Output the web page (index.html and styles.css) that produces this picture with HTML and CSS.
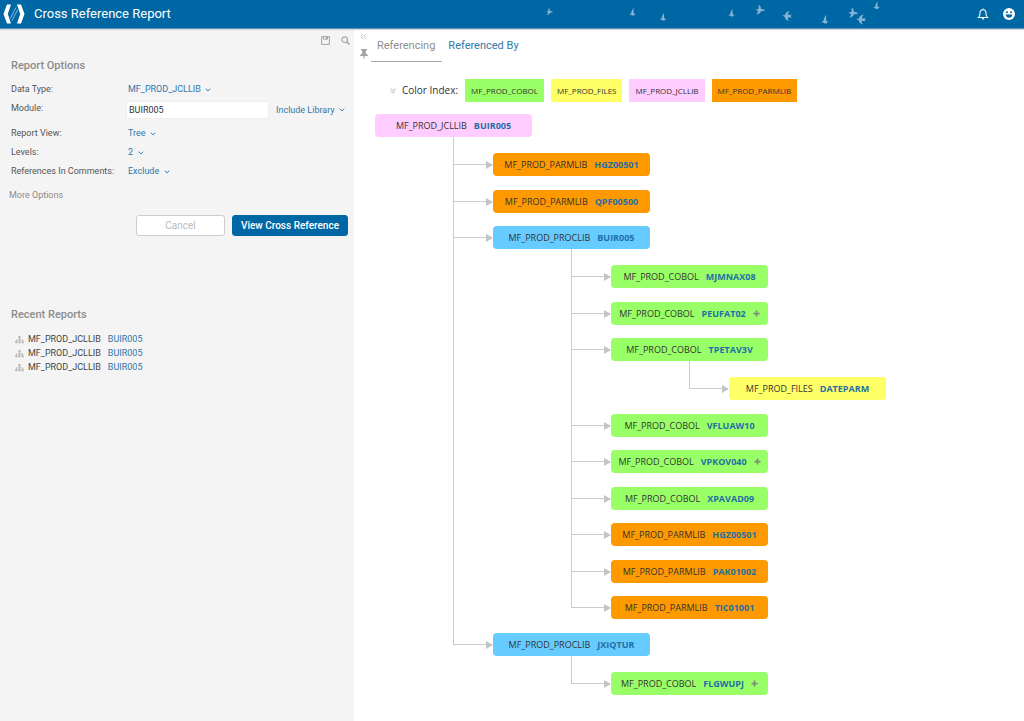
FILE: index.html
```html
<!DOCTYPE html>
<html lang="en">
<head>
<meta charset="utf-8">
<meta name="viewport" content="width=device-width, initial-scale=1">
<title>Cross Reference Report</title>
<link rel="stylesheet" href="styles.css">
</head>
<body>
<svg class="symbols" aria-hidden="true">
  <symbol id="chevron" viewBox="0 0 6 4"><path d="M.8 .7 3 2.9 5.200 .7" fill="none" stroke="currentColor" stroke-width="1"/></symbol>
  <symbol id="tree" viewBox="0 0 10 10"><path d="M5 3v3M1.500 8V5.500h7V8M5 5v3" fill="none" stroke="currentColor"/><path d="M3.800 1h2.400v2.500H3.800zM.3 7h2.400v2.300H.3zM3.800 7h2.400v2.300H3.800zM7.300 7h2.400v2.300H7.300z" fill="currentColor"/></symbol>
  <symbol id="gull" viewBox="0 0 8 9"><path d="M5.600 0C3.800 1.300 2.700 3.300 2.600 5.800L.2 7.200l2.300.3 1 1h2.200l.3-1L8 6.700 5.600 6.200C4.900 4.200 4.900 2 5.600 0z" fill="currentColor"/></symbol>
  <symbol id="swift" viewBox="0 0 10 10"><path d="M3.500 0c1.600.8 2.500 2.300 2.400 4.200L9.800 5.200v1L6 6.700C5.300 8.300 3.600 9.700 1.300 10c1.300-1.300 1.600-2.300 1.700-3.500L.2 5.200l3.100-.8C3.800 3 3.800 1.500 3.500 0z" fill="currentColor"/></symbol>
  <symbol id="martin" viewBox="0 0 10 10"><path d="M7.800 0C5 .4 3.300 2 3 4L.2 4.600l2.600 1.400C3 7.700 4.400 9.400 7 10 6 8.600 5.700 7.600 5.900 6.500L9.800 6.500 8.500 5l1.300-1.500-3.800.4C6 2.700 6.500 1.300 7.800 0z" fill="currentColor"/></symbol>
  <symbol id="plus" viewBox="0 0 8 8"><path d="M4 .5v7M.5 4h7" stroke="currentColor" stroke-width="2"/></symbol>
</svg>

<header class="topbar">
  <svg class="logo" viewBox="0 0 22 20" aria-hidden="true">
    <path d="M4 .5h4L4.800 10 8 19.500H4L.5 10zM18 .5h-4l3.200 9.500-3.200 9.500h4l3.500-9.500z" fill="#fff"/>
    <path d="M13 3.500 7.200 14.500M14.800 5.500 9 16.500" stroke="#a9cde3" stroke-width=".8"/>
  </svg>
  <h1 class="title">Cross Reference Report</h1>
  <svg class="birds" viewBox="0 0 340 28" aria-hidden="true">
    <use href="#swift" x="6" y="8" width="7" height="7"/>
    <use href="#gull" x="89" y="8" width="7" height="8"/>
    <use href="#gull" x="119" y="13" width="8" height="8"/>
    <use href="#gull" x="188" y="9" width="7" height="8"/>
    <use href="#swift" x="215" y="4" width="10" height="11"/>
    <use href="#martin" x="242" y="11" width="10" height="10"/>
    <use href="#gull" x="281" y="15" width="8" height="9"/>
    <use href="#swift" x="308" y="7" width="10" height="11"/>
    <use href="#martin" x="316" y="14" width="10" height="11"/>
    <use href="#gull" x="333" y="1" width="7" height="9"/>
  </svg>
  <button class="icon-button top-icon" aria-label="Notifications">
    <svg width="12" height="12" viewBox="0 0 12 12"><path d="M1.500 9.500C3 8.300 3 6.800 3 5.200 3 3.200 4.200 1.800 6 1.800s3 1.400 3 3.400c0 1.600 0 3.100 1.500 4.300zM6 .5v1.300" fill="none" stroke="#fff" stroke-width="1.100"/><path d="M4.700 10.300h2.600c0 .8-.5 1.300-1.300 1.300s-1.300-.5-1.300-1.300z" fill="#fff"/></svg>
  </button>
  <button class="icon-button top-icon" aria-label="Account">
    <svg width="12" height="12" viewBox="0 0 12 12"><circle cx="6" cy="6" r="6" fill="#fff"/><circle cx="4" cy="4.300" r="1" fill="#0067a5"/><circle cx="8" cy="4.300" r="1" fill="#0067a5"/><path d="M2.600 6.500h6.800C9 8.700 7.800 9.700 6 9.700S3 8.700 2.600 6.500z" fill="#0067a5"/></svg>
  </button>
</header>

<div class="layout">
  <aside class="sidebar">
    <div class="tools">
      <button class="icon-button" aria-label="Save"><svg width="9" height="9" viewBox="0 0 9 9"><path d="M.6.600h7.800v7.800H.6zM2.500.6v2.600h4V.6" fill="none" stroke="currentColor"/><path d="M5 1h1.500v2H5z" fill="currentColor"/></svg></button>
      <button class="icon-button" aria-label="Search"><svg width="9" height="9" viewBox="0 0 9 9"><circle cx="3.700" cy="3.700" r="2.800" fill="none" stroke="currentColor" stroke-width="1.200"/><path d="M5.700 5.700 8.400 8.400" stroke="currentColor" stroke-width="1.500"/></svg></button>
    </div>

    <h2 class="heading">Report Options</h2>
    <form class="options">
      <label for="type">Data Type:</label>
      <div class="field"><select id="type" class="picker"><option>MF_PROD_JCLLIB</option></select><svg class="chevron"><use href="#chevron"/></svg></div>

      <label for="module">Module:</label>
      <div class="field module-field">
        <input id="module" class="textbox" type="text" value="BUIR005">
        <select class="picker" aria-label="Library"><option>Include Library</option></select><svg class="chevron"><use href="#chevron"/></svg>
      </div>

      <label for="view">Report View:</label>
      <div class="field"><select id="view" class="picker"><option>Tree</option></select><svg class="chevron"><use href="#chevron"/></svg></div>

      <label for="levels">Levels:</label>
      <div class="field"><select id="levels" class="picker"><option>2</option></select><svg class="chevron"><use href="#chevron"/></svg></div>

      <label for="comments">References In Comments:</label>
      <div class="field"><select id="comments" class="picker"><option>Exclude</option></select><svg class="chevron"><use href="#chevron"/></svg></div>
    </form>
    <button class="more">More Options</button>
    <div class="actions">
      <button class="button cancel">Cancel</button>
      <button class="button primary">View Cross Reference</button>
    </div>

    <h2 class="heading">Recent Reports</h2>
    <ul class="recent">
      <li><svg class="tree-icon"><use href="#tree"/></svg><span>MF_PROD_JCLLIB</span><a href="#">BUIR005</a></li>
      <li><svg class="tree-icon"><use href="#tree"/></svg><span>MF_PROD_JCLLIB</span><a href="#">BUIR005</a></li>
      <li><svg class="tree-icon"><use href="#tree"/></svg><span>MF_PROD_JCLLIB</span><a href="#">BUIR005</a></li>
    </ul>
  </aside>

  <main class="report">
    <div class="report-head">
      <div class="panel-tools">
        <button class="icon-button" aria-label="Collapse panel"><svg width="7" height="7" viewBox="0 0 7 7"><path d="M3.200.7.8 3.500l2.400 2.800M6.200.7 3.800 3.500l2.400 2.800" fill="none" stroke="#c4c4c4" stroke-width=".9"/></svg></button>
        <button class="icon-button" aria-label="Pin panel"><svg width="8" height="11" viewBox="0 0 8 11"><path d="M1 0h6v1.500H5.800v3L7.800 6v1H4.700L4 11l-.7-4H.2V6l2-1.500v-3H1z" fill="#a3a3a3"/></svg></button>
      </div>
      <nav class="tabs">
        <a class="tab active" href="#">Referencing</a>
        <a class="tab" href="#">Referenced By</a>
      </nav>
    </div>

    <div class="legend">
      <button class="icon-button" aria-label="Collapse color index"><svg width="6" height="6" viewBox="0 0 6 6"><path d="M.6.600 3 2.700 5.400.6M.6 3 3 5.100 5.400 3" fill="none" stroke="#a9b5b2" stroke-width=".9"/></svg></button>
      <span class="legend-title">Color Index:</span>
      <ul class="swatches">
        <li class="swatch cobol">MF_PROD_COBOL</li>
        <li class="swatch files">MF_PROD_FILES</li>
        <li class="swatch jcllib">MF_PROD_JCLLIB</li>
        <li class="swatch parmlib">MF_PROD_PARMLIB</li>
      </ul>
    </div>

    <ul class="tree">
      <li>
        <div class="node jcllib">MF_PROD_JCLLIB <a href="#">BUIR005</a></div>
        <ul>
          <li><div class="node parmlib">MF_PROD_PARMLIB <a href="#">HGZ00501</a></div></li>
          <li><div class="node parmlib">MF_PROD_PARMLIB <a href="#">QPF00500</a></div></li>
          <li>
            <div class="node proclib">MF_PROD_PROCLIB <a href="#">BUIR005</a></div>
            <ul>
              <li><div class="node cobol">MF_PROD_COBOL <a href="#">MJMNAX08</a></div></li>
              <li><div class="node cobol">MF_PROD_COBOL <a href="#">PEUFAT02</a><button class="icon-button expand" aria-label="Expand PEUFAT02"><svg width="7" height="7"><use href="#plus"/></svg></button></div></li>
              <li>
                <div class="node cobol">MF_PROD_COBOL <a href="#">TPETAV3V</a></div>
                <ul>
                  <li><div class="node files">MF_PROD_FILES <a href="#">DATEPARM</a></div></li>
                </ul>
              </li>
              <li><div class="node cobol">MF_PROD_COBOL <a href="#">VFLUAW10</a></div></li>
              <li><div class="node cobol">MF_PROD_COBOL <a href="#">VPKOV040</a><button class="icon-button expand" aria-label="Expand VPKOV040"><svg width="7" height="7"><use href="#plus"/></svg></button></div></li>
              <li><div class="node cobol">MF_PROD_COBOL <a href="#">XPAVAD09</a></div></li>
              <li><div class="node parmlib">MF_PROD_PARMLIB <a href="#">HGZ00501</a></div></li>
              <li><div class="node parmlib">MF_PROD_PARMLIB <a href="#">PAK01002</a></div></li>
              <li><div class="node parmlib">MF_PROD_PARMLIB <a href="#">TIC01001</a></div></li>
            </ul>
          </li>
          <li>
            <div class="node proclib">MF_PROD_PROCLIB <a href="#">JXIQTUR</a></div>
            <ul>
              <li><div class="node cobol">MF_PROD_COBOL <a href="#">FLGWUPJ</a><button class="icon-button expand" aria-label="Expand FLGWUPJ"><svg width="7" height="7"><use href="#plus"/></svg></button></div></li>
            </ul>
          </li>
        </ul>
      </li>
    </ul>
  </main>
</div>
</body>
</html>
```

FILE: styles.css
```css
* { box-sizing: border-box; }

body {
  margin: 0;
  min-height: 100vh;
  display: flex;
  flex-direction: column;
  font: 9px/15px Roboto, sans-serif;
  color: #555;
  background: #fff;
}

ul { list-style: none; margin: 0; padding: 0; }
a { color: #2f77ab; text-decoration: none; }
button, input, select { font: inherit; }
.symbols { position: absolute; width: 0; height: 0; }

.icon-button {
  display: inline-flex;
  padding: 0;
  border: 0;
  background: none;
  color: #a3a3a3;
}

/* Top bar */
.topbar {
  position: relative;
  display: flex;
  align-items: center;
  height: 29px;
  padding: 0 9px 0 3px;
  background: #0067a5;
  border-bottom: 1px solid #5b96c0;
  box-shadow: 0 1px 1px #d5d5da;
}
.logo { width: 22px; height: 20px; margin-right: 9px; }
.title { flex: 1; margin: 0; font-size: 13px; line-height: 20px; font-weight: 400; color: #fff; }
.birds { position: absolute; right: 144px; top: 0; width: 340px; height: 28px; color: #86b3d3; }
.top-icon { margin-left: 14px; }

.layout { flex: 1; display: flex; }

/* Sidebar */
.sidebar { flex: 0 0 354px; padding: 7px 4px 0 11px; background: #f4f4f4; }
.tools { display: flex; justify-content: flex-end; gap: 11px; height: 20px; }
.tools .icon-button { height: 9px; }
.heading { margin: 0; font-size: 11px; line-height: 20px; font-weight: 500; color: #8c8c8c; }

.options {
  display: grid;
  grid-template-columns: 117px 1fr;
  row-gap: 4px;
  margin-top: 6px;
}
.field { display: flex; align-items: center; }
.picker {
  appearance: none;
  padding: 0;
  border: 0;
  background: none;
  color: #2f77ab;
}
.chevron { width: 6px; height: 4px; margin-left: 4px; color: #2f77ab; }
.module-field { margin-bottom: 3px; }
.textbox {
  width: 143px;
  height: 18px;
  margin: 0 7px 0 -2px;
  padding: 0 2px;
  border: 1px solid #eee;
  border-radius: 2px;
  background: #fff;
  color: #333;
}
.more { display: block; margin: 9px 0 0 -2px; padding: 0; border: 0; background: none; color: #8c8c8c; }
.actions { display: flex; justify-content: flex-end; gap: 7px; margin: 12px 2px 69px 0; }
.button { height: 21px; padding: 0 8px; border: 1px solid #0067a5; border-radius: 3px; font-size: 10px; }
.cancel { width: 89px; background: #fff; border-color: #ccc; color: #bbb; }
.primary { background: #0067a5; color: #fff; font-weight: 500; }

.recent { margin-top: 7px; }
.recent li { display: flex; align-items: center; height: 14px; color: #444; }
.recent a { margin-left: 7px; }
.tree-icon { width: 9px; height: 9px; margin: 0 4px 0 4px; color: #b5b5b5; }

/* Report */
.report { flex: 1; padding: 4px 8px 16px 6px; }
.report-head { display: flex; gap: 3px; }
.panel-tools { display: flex; flex-direction: column; gap: 9px; width: 8px; }
.tabs { display: flex; }
.tab { padding: 1px 7px 3px 6px; font-size: 11px; line-height: 24px; border-bottom: 1px solid transparent; }
.tab.active { color: #8f8f8f; border-color: #aaa; }

.legend {
  display: flex;
  align-items: center;
  margin: 17px 0 12px 30px;
  font-family: "Open Sans", sans-serif;
  color: #333;
}
.legend-title { margin: 0 7px 0 6px; font-size: 10px; }
.swatches { display: flex; flex-wrap: wrap; gap: 7px; }
.swatch { padding: 0 6px; font-size: 8px; line-height: 23px; }

.cobol { background: #99ff66; }
.files { background: #ffff66; }
.jcllib { background: #ffccff; }
.parmlib { background: #ff9900; }
.proclib { background: #66ccff; }

/* Reference tree: each child list is indented and joined to its parent node */
.tree { margin-left: 15px; font-family: "Open Sans", sans-serif; color: #333; }
.tree ul { padding: 16px 0 0 118px; }
.tree ul li { position: relative; }
.tree ul > li + li { margin-top: 13px; }
.tree ul > li:nth-child(even) { margin-top: 14px; }
.tree ul > li::before {
  content: "";
  position: absolute;
  left: -40px;
  top: -16px;
  bottom: 0;
  border-left: 1px solid #ccc;
}
.tree ul > li:last-child::before { bottom: auto; height: 28px; }
.node {
  position: relative;
  display: flex;
  align-items: center;
  justify-content: center;
  gap: 7px;
  width: 157px;
  height: 23px;
  border-radius: 4px;
  white-space: nowrap;
}
.node a { font-weight: 700; color: #1f6fa5; }
.tree ul .node::before {
  content: "";
  position: absolute;
  left: -40px;
  top: 11px;
  width: 36px;
  border-top: 1px solid #ccc;
}
.tree ul .node::after {
  content: "";
  position: absolute;
  left: -7px;
  top: 8px;
  border: 4px solid transparent;
  border-left: 7px solid #c4c4c4;
  border-right: 0;
}
.expand { color: #7e8d7a; }
```
